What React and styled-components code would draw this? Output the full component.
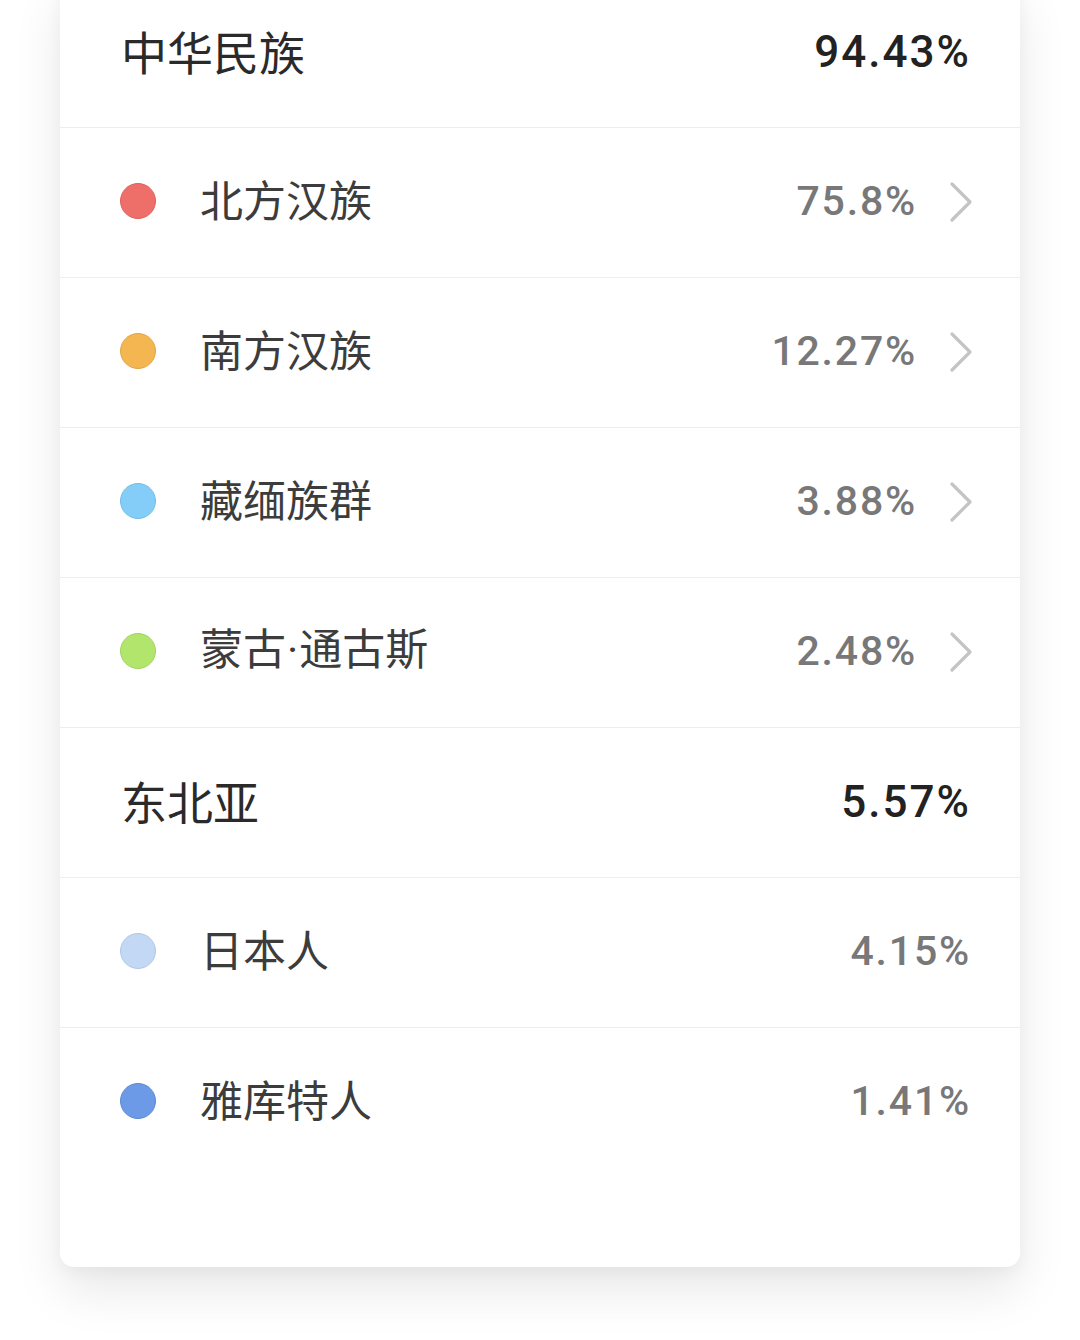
import styled, { createGlobalStyle } from 'styled-components';

const GlobalStyle = createGlobalStyle`
    html, body {
        margin: 0;
        padding: 0;
        background: #ffffff;
    }
    body {
        font-family: 'Noto Sans CJK SC', 'Noto Sans', sans-serif;
        overflow: hidden;
    }
`;

const Page = styled.div`
    width: 1080px;
    height: 1340px;
    padding: 0 60px;
    box-sizing: border-box;
    overflow: hidden;
`;

// the list is scrolled, so the card top sits above the viewport
const Card = styled.div`
    margin-top: -22px;
    background: #fff;
    border-radius: 0 0 14px 14px;
    box-shadow: 0 24px 50px rgba(0, 0, 0, 0.09), 0 6px 16px rgba(0, 0, 0, 0.04);
    padding-bottom: 89px;
`;

const Row = styled.div`
    display: flex;
    align-items: center;
    height: 149px;
    padding: 0 ${(p) => (p.$chevron ? '46px' : '49px')} 0 ${(p) => (p.$group ? '61px' : '60px')};
    border-bottom: 1px solid ${(p) => (p.$last ? 'transparent' : '#eeeeee')};
`;

const Dot = styled.span`
    flex: none;
    width: 34px;
    height: 34px;
    border-radius: 50%;
    background: ${(p) => p.$color};
    border: 1px solid ${(p) => p.$edge};
    margin-right: 44px;
    margin-top: -4px;
`;

const Name = styled.span`
    flex: 1;
    font-family: 'Noto Sans CJK SC', sans-serif;
    font-size: ${(p) => (p.$group ? '46px' : '43px')};
    line-height: 1;
    color: ${(p) => (p.$group ? '#2a2a2a' : '#3c3c3c')};
    margin-top: ${(p) => (p.$group ? '-6px' : '-8px')};

    .sep {
        font-family: 'Roboto', sans-serif;
        margin: 0 1px;
    }
`;

const Value = styled.span`
    font-family: 'Roboto', 'Liberation Sans', sans-serif;
    font-weight: 500;
    font-size: ${(p) => (p.$group ? '44px' : '41px')};
    letter-spacing: ${(p) => (p.$group ? '2px' : '1.8px')};
    line-height: 1;
    color: ${(p) => (p.$group ? '#222222' : '#787878')};
    margin-top: ${(p) => (p.$group ? '-2px' : '-3px')};
`;

const Chevron = styled.svg`
    flex: none;
    width: 26px;
    height: 42px;
    margin-left: 31px;
    margin-top: -2px;
`;

const groups = [
    {
        name: '中华民族',
        value: '94.43%',
        items: [
            { name: '北方汉族', value: '75.8%', color: '#ee6f6a', edge: '#dd615c', more: true },
            { name: '南方汉族', value: '12.27%', color: '#f4b651', edge: '#e3a548', more: true },
            { name: '藏缅族群', value: '3.88%', color: '#84cdf8', edge: '#74bde8', more: true },
            { name: '蒙古·通古斯', value: '2.48%', color: '#b1e56c', edge: '#a0d45f', more: true },
        ],
    },
    {
        name: '东北亚',
        value: '5.57%',
        items: [
            { name: '日本人', value: '4.15%', color: '#c3d8f5', edge: '#b0c7e6' },
            { name: '雅库特人', value: '1.41%', color: '#6c9ae6', edge: '#5d89d4' },
        ],
    },
];

function ItemName({ text }) {
    const parts = text.split('·');
    if (parts.length === 1) return text;
    return (
        <>
            {parts[0]}
            <span className='sep'>·</span>
            {parts[1]}
        </>
    );
}

export default function App() {
    return (
        <Page>
            <GlobalStyle />
            <Card>
                {groups.map((g, gi) => (
                    <div key={g.name}>
                        <Row $group>
                            <Name $group>{g.name}</Name>
                            <Value $group>{g.value}</Value>
                        </Row>
                        {g.items.map((it, ii) => (
                            <Row
                                key={it.name}
                                $chevron={it.more}
                                $last={gi === groups.length - 1 && ii === g.items.length - 1}
                            >
                                <Dot $color={it.color} $edge={it.edge} />
                                <Name>
                                    <ItemName text={it.name} />
                                </Name>
                                <Value>{it.value}</Value>
                                {it.more && (
                                    <Chevron viewBox='0 0 26 42'>
                                        <path
                                            d='M4 3 L22 21 L4 39'
                                            fill='none'
                                            stroke='#c4c4c4'
                                            strokeWidth='3.2'
                                            strokeLinecap='round'
                                            strokeLinejoin='round'
                                        />
                                    </Chevron>
                                )}
                            </Row>
                        ))}
                    </div>
                ))}
            </Card>
        </Page>
    );
}
